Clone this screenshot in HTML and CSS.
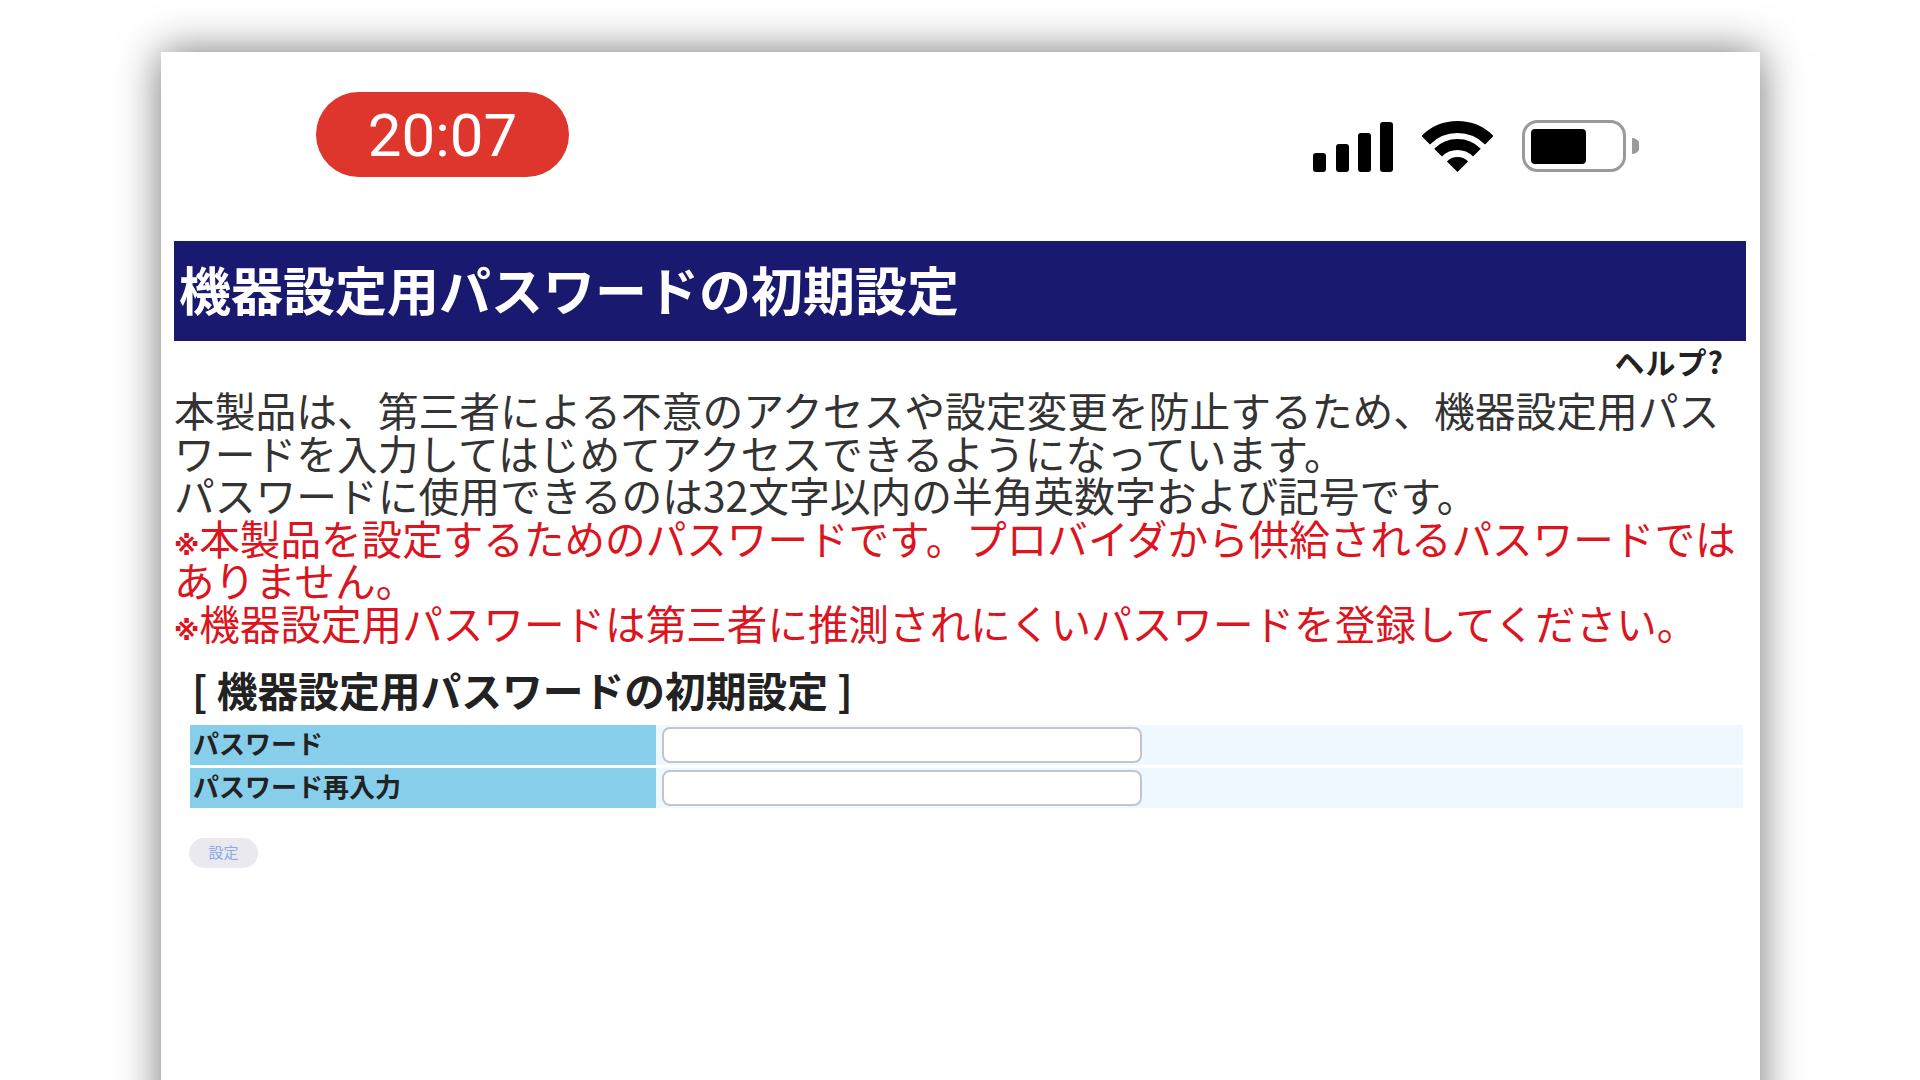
FILE: index.html
```html
<!DOCTYPE html>
<html lang="ja">
<head>
    <meta charset="UTF-8">
    <title>機器設定用パスワードの初期設定</title>
    <link rel="stylesheet" href="styles.css">
</head>
<body>
<div class="phone">
    <div class="status-bar">
        <div class="clock">20:07</div>
        <div class="status-icons">
            <svg class="icon-signal" width="80" height="50" viewBox="0 0 80 50">
                <rect x="0" y="31" width="13" height="19" rx="3"/>
                <rect x="23" y="22" width="13" height="28" rx="3"/>
                <rect x="45" y="11" width="13" height="39" rx="3"/>
                <rect x="67" y="0" width="13" height="50" rx="3"/>
            </svg>
            <svg class="icon-wifi" width="71" height="51" viewBox="0 0 71 51">
                <path d="M3.7 19.2A45 45 0 0 1 67.3 19.2" fill="none" stroke="#000" stroke-width="12"/>
                <path d="M16.1 31.6A27.5 27.5 0 0 1 54.9 31.6" fill="none" stroke="#000" stroke-width="11"/>
                <path d="M35.5 51L24.9 40.4A15 15 0 0 1 46.1 40.4Z"/>
            </svg>
            <svg class="icon-battery" width="117" height="52" viewBox="0 0 117 52">
                <rect x="1.5" y="1.5" width="101" height="49" rx="14" fill="none" stroke="#9a9a9a" stroke-width="3"/>
                <rect x="9" y="9" width="55" height="35" rx="4"/>
                <path d="M110 18A8 8 0 0 1 110 34Z" fill="#9a9a9a"/>
            </svg>
        </div>
    </div>

    <div class="content">
        <h1 class="page-title">機器設定用パスワードの初期設定</h1>
        <div class="help">ヘルプ?</div>
        <p class="intro">本製品は、第三者による不意のアクセスや設定変更を防止するため、機器設定用パスワードを入力してはじめてアクセスできるようになっています。<br>パスワードに使用できるのは32文字以内の半角英数字および記号です。</p>
        <p class="notice"><span class="mark">※</span>本製品を設定するためのパスワードです。プロバイダから供給されるパスワードではありません。<br><span class="mark">※</span>機器設定用パスワードは第三者に推測されにくいパスワードを登録してください。</p>

        <h2 class="section-title">[ 機器設定用パスワードの初期設定 ]</h2>
        <table class="form-table">
            <tr>
                <th>パスワード</th>
                <td><input type="password" class="text-input"></td>
            </tr>
            <tr>
                <th>パスワード再入力</th>
                <td><input type="password" class="text-input"></td>
            </tr>
        </table>
        <button class="submit-btn">設定</button>
    </div>
</div>
</body>
</html>
```

FILE: styles.css
```css
html, body {
    height: 100%;
}
body {
    margin: 0;
    overflow: hidden;
    background-color: #fff;
    font-family: "Noto Sans CJK JP", "Noto Sans", sans-serif;
    color: #222;
}
.phone {
    height: 1200px;
    margin: 52px 160px 0 161px;
    background-color: #fff;
    box-shadow: 0 0 40px rgba(0, 0, 0, 0.55);
}
.status-bar {
    display: flex;
    justify-content: space-between;
    height: 189px;
    padding: 40px 121px 0 155px;
    box-sizing: border-box;
}
.clock {
    width: 253px;
    height: 85px;
    border-radius: 43px;
    background-color: #de352c;
    color: #fff;
    font-family: Roboto, sans-serif;
    font-size: 60px;
    line-height: 88px;
    text-align: center;
}
.status-icons {
    display: flex;
    align-items: flex-end;
    gap: 29px;
    height: 80px;
}
.status-icons svg {
    display: block;
}
.content {
    padding: 0 14px 0 13px;
}
.page-title {
    margin: 0;
    height: 100px;
    padding-left: 5px;
    background-color: #191970;
    color: #fff;
    font-size: 52px;
    font-weight: 700;
    line-height: 95px;
    white-space: nowrap;
}
.help {
    height: 48px;
    padding-right: 22px;
    font-size: 30px;
    font-weight: 700;
    letter-spacing: 1px;
    line-height: 40px;
    text-align: right;
}
.intro, .notice {
    margin: 0;
    font-weight: 400;
    line-height: 42.5px;
}
.intro {
    color: #333;
    font-size: 40.75px;
}
.notice {
    color: #dc1420;
    font-size: 40.6px;
}
.mark {
    font-family: "DejaVu Sans", sans-serif;
    font-size: 26px;
    font-weight: 700;
    line-height: 0;
}
.section-title {
    margin: 16px 0 0 18px;
    font-size: 40.75px;
    font-weight: 700;
    line-height: 60px;
}
.form-table {
    width: 1553px;
    margin: 2px 0 0 16px;
    border-collapse: separate;
    border-spacing: 0 3px;
}
.form-table th {
    width: 466px;
    height: 40px;
    padding: 0 0 4px 3px;
    box-sizing: border-box;
    background-color: #87ceeb;
    font-size: 26px;
    font-weight: 700;
    line-height: 34px;
    text-align: left;
}
.form-table td {
    padding: 0 0 0 6px;
    background-color: #f0f8ff;
    line-height: 0;
}
.text-input {
    width: 480px;
    height: 36px;
    padding: 0;
    box-sizing: border-box;
    background-color: #fff;
    border: 2px solid #c4c4cc;
    border-radius: 8px;
}
.submit-btn {
    display: block;
    width: 69px;
    height: 30px;
    margin: 27px 0 0 15px;
    padding: 0 0 3px;
    border: none;
    border-radius: 16px;
    background-color: #e9e9ef;
    color: #8aa9e6;
    font-family: inherit;
    font-size: 15px;
}
```
